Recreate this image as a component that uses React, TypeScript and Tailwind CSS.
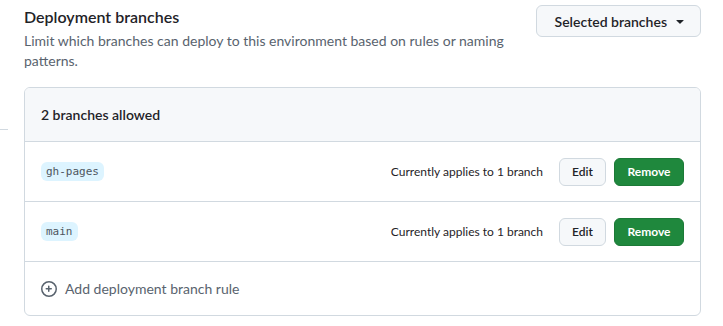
import React from 'react';

const font = { fontFamily: 'Lato, "Segoe UI", "Noto Sans", sans-serif' };

const branches = ['gh-pages', 'main'];

function TriangleDown() {
  return (
    <svg width="16" height="16" viewBox="0 0 16 16" fill="currentColor">
      <path d="m4.427 7.427 3.396 3.396a.25.25 0 0 0 .354 0l3.396-3.396A.25.25 0 0 0 11.396 7H4.604a.25.25 0 0 0-.177.427Z" />
    </svg>
  );
}

function PlusCircle() {
  return (
    <svg width="16" height="16" viewBox="0 0 16 16" fill="currentColor">
      <path d="M7.75 4.5a.75.75 0 0 1 .75.75V7h1.75a.75.75 0 0 1 0 1.5H8.5v1.75a.75.75 0 0 1-1.5 0V8.5H5.25a.75.75 0 0 1 0-1.5H7V5.25a.75.75 0 0 1 .75-.75Z" />
      <path d="M8 0a8 8 0 1 1 0 16A8 8 0 0 1 8 0ZM1.5 8a6.5 6.5 0 1 0 13 0 6.5 6.5 0 0 0-13 0Z" />
    </svg>
  );
}

export default function App() {
  return (
    <div className="flex bg-white w-[723px] h-[326px] text-[#1f2328]" style={font}>
      {/* stray border from the page behind */}
      <div className="w-[8px] mt-[129px] h-0 border-t border-[#d1d9e0]"></div>

      <div className="ml-[16px] w-[677px] pt-[5px]">
        {/* Section header */}
        <div className="flex justify-between items-start">
          <div className="w-[495px]">
            <h2 className="text-[16px] leading-[24px] font-semibold">Deployment branches</h2>
            <p className="mt-[2px] text-[14px] leading-[20px] text-[#59636e]">
              Limit which branches can deploy to this environment based on rules or naming patterns.
            </p>
          </div>
          <button className="flex items-center gap-[5px] h-[32px] pl-[18px] pr-[12px] bg-[#f6f8fa] border border-[#d1d9e0] rounded-[6px] text-[14px] font-semibold">
            Selected branches
            <TriangleDown />
          </button>
        </div>

        {/* Branch rules box */}
        <div className="mt-[16px] border border-[#d1d9e0] rounded-[6px] overflow-hidden">
          <div className="h-[53px] flex items-center px-[16px] bg-[#f6f8fa] text-[14px] font-semibold">
            2 branches allowed
          </div>

          {branches.map((name) => (
            <div key={name} className="h-[60px] flex items-center justify-between pl-[16px] pr-[16px] border-t border-[#d1d9e0]">
              <span
                className="px-[5px] h-[19px] leading-[19px] rounded-[6px] bg-[#ddf4ff] text-[11px] text-[#4d555e]"
                style={{ fontFamily: '"DejaVu Sans Mono", "Liberation Mono", monospace' }}
              >
                {name}
              </span>
              <div className="flex items-center">
                <span className="text-[12px] mr-[16px]">Currently applies to 1 branch</span>
                <button className="h-[28px] w-[47px] bg-[#f6f8fa] border border-[#d1d9e0] rounded-[6px] text-[12px] font-semibold">
                  Edit
                </button>
                <button className="ml-[8px] h-[28px] w-[70px] bg-[#1f883d] border border-[#1c7a37] text-white rounded-[6px] text-[12px] font-bold">
                  Remove
                </button>
              </div>
            </div>
          ))}

          <div className="h-[54px] flex items-center gap-[8px] px-[16px] border-t border-[#d1d9e0] text-[14px] text-[#59636e]">
            <PlusCircle />
            Add deployment branch rule
          </div>
        </div>
      </div>
    </div>
  );
}
